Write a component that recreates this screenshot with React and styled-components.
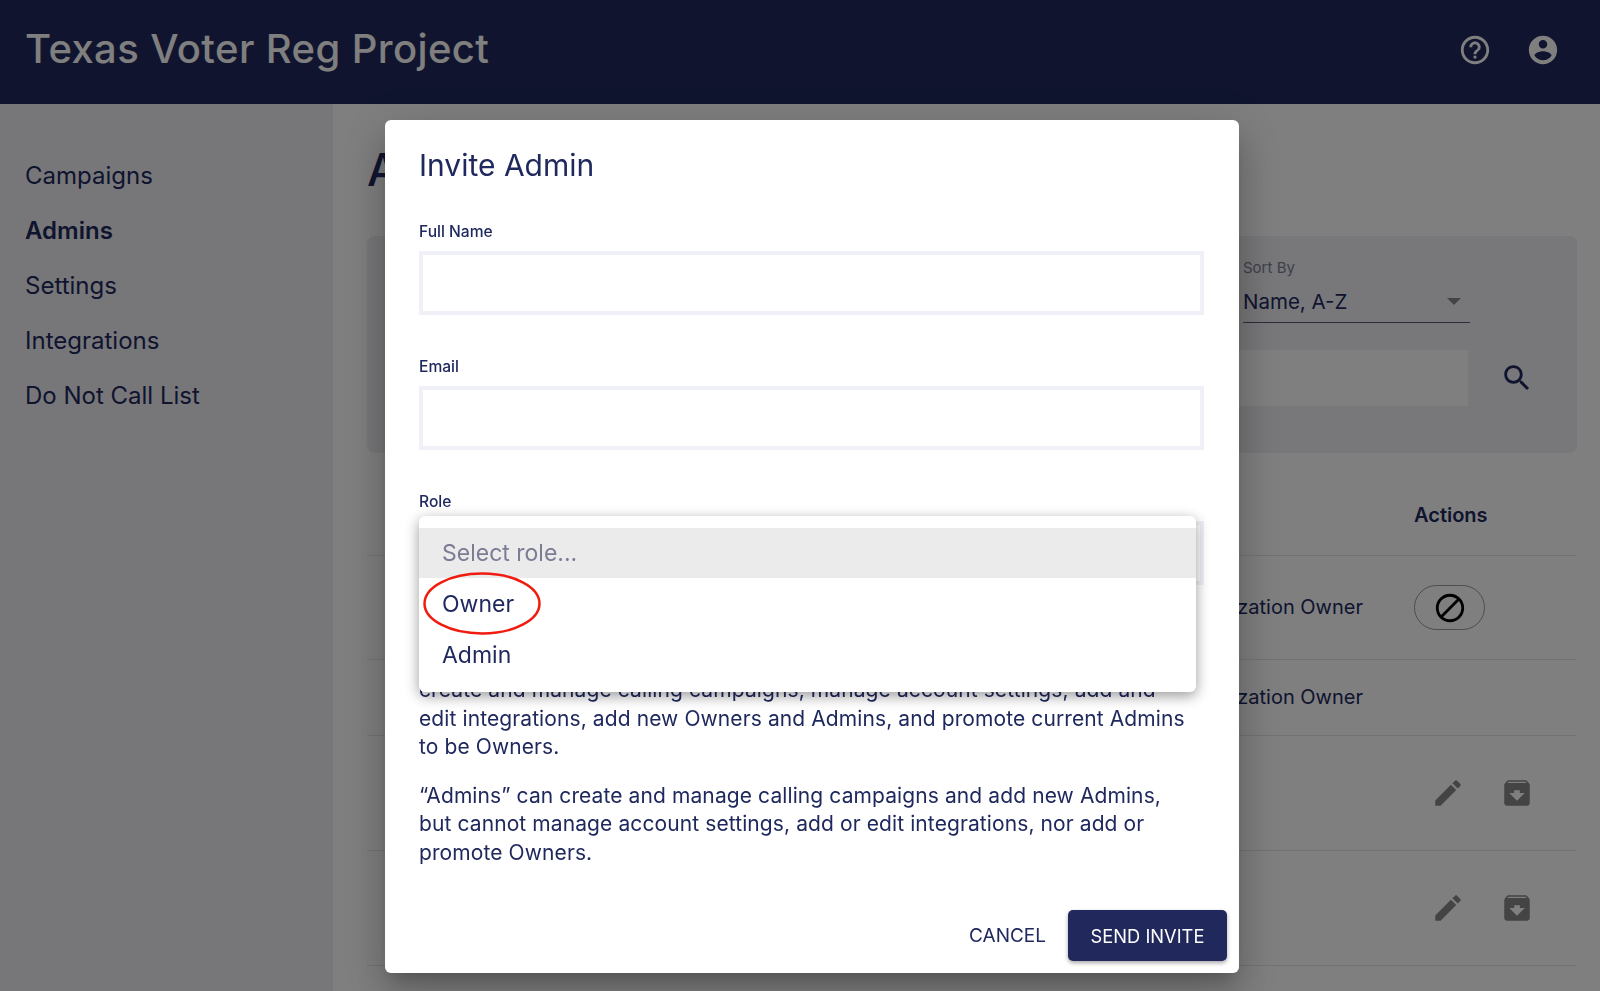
import styled, { createGlobalStyle } from 'styled-components';

const NAVY = '#20295e';

const GlobalStyle = createGlobalStyle`
  html, body {
    margin: 0;
    height: 991px;
    overflow: hidden;
    background: #fff;
    font-family: Inter, "Noto Sans", sans-serif;
    color: ${NAVY};
  }
  * { box-sizing: border-box; }
`;

const Header = styled.header`
  height: 104px;
  background: ${NAVY};
  display: flex;
  align-items: center;
  justify-content: space-between;
  padding: 0 40px 4px 25px;
`;

const Brand = styled.div`
  color: #fff;
  font-size: 40px;
  font-weight: 500;
  letter-spacing: 0.4px;
  margin-top: -3px;
`;

const HeaderIcons = styled.div`
  display: flex;
  gap: 34px;
  color: #fff;
`;

const Body = styled.div`
  display: flex;
  height: 887px;
  overflow: hidden;
`;

const Sidebar = styled.nav`
  width: 333px;
  flex: none;
  background: #eeeef2;
  padding: 44px 0 0 25px;
  display: flex;
  flex-direction: column;
`;

const NavItem = styled.a`
  height: 55px;
  line-height: 55px;
  font-size: 24px;
  font-weight: ${(props) => (props.active ? 600 : 400)};
`;

const Main = styled.main`
  flex: 1;
  padding: 44px 23px 0 34px;
`;

const PageTitle = styled.h1`
  margin: 0;
  height: 88px;
  font-size: 45px;
  line-height: 44px;
  font-weight: 500;
`;

const FilterPanel = styled.section`
  height: 217px;
  background: #f0f0f4;
  border-radius: 8px;
  padding: 21px 43px 0 0;
  display: flex;
  flex-direction: column;
  align-items: flex-end;
`;

const SortField = styled.div`
  width: 227px;
  margin-right: 64px;
`;

const SortLabel = styled.div`
  font-size: 15px;
  line-height: 22px;
  color: #7c7f98;
`;

const SortValue = styled.div`
  height: 44px;
  display: flex;
  align-items: center;
  justify-content: space-between;
  font-size: 20.5px;
  border-bottom: 1.5px solid #555a72;
  padding: 1px 9px 0 0;
`;

const Caret = styled.span`
  width: 0;
  height: 0;
  border-left: 7px solid transparent;
  border-right: 7px solid transparent;
  border-top: 7px solid #888;
`;

const SearchRow = styled.div`
  display: flex;
  align-items: center;
  gap: 32px;
  margin-top: 27px;
`;

const SearchInput = styled.div`
  width: 900px;
  height: 56px;
  background: #fff;
`;

const TableHead = styled.div`
  height: 103px;
  display: flex;
  justify-content: flex-end;
  align-items: flex-end;
  padding: 0 0 27px 0;
  border-bottom: 1px solid #e6e6e6;
`;

const ActionsTitle = styled.div`
  width: 163px;
  font-size: 20px;
  font-weight: 600;
  line-height: 26px;
`;

const Row = styled.div`
  height: ${(props) => props.height}px;
  display: flex;
  justify-content: flex-end;
  align-items: center;
  border-bottom: 1px solid #e6e6e6;
`;

const RoleCell = styled.div`
  font-size: 20px;
  margin-right: 51px;
  padding-bottom: 2px;
`;

const ActionCell = styled.div`
  width: 163px;
  display: flex;
  align-items: center;
  gap: 35px;
  padding-left: ${(props) => (props.pill ? 0 : 17)}px;
  color: #888;
`;

const PillButton = styled.div`
  width: 71px;
  height: 45px;
  border: 1px solid #9a9a9a;
  border-radius: 23px;
  display: flex;
  align-items: center;
  justify-content: center;
  color: #000;
`;

const Overlay = styled.div`
  position: fixed;
  inset: 0;
  background: rgba(0, 0, 0, 0.5);
  padding: 120px 0 0 385px;
`;

const Modal = styled.div`
  width: 854px;
  height: 853px;
  background: #fff;
  border-radius: 6px;
  padding: 25px 12px 11px 34px;
  box-shadow: 0 11px 15px -7px rgba(0, 0, 0, 0.2), 0 24px 38px 3px rgba(0, 0, 0, 0.14),
    0 9px 46px 8px rgba(0, 0, 0, 0.12);
`;

const ModalTitle = styled.h2`
  margin: 0 0 37px;
  font-size: 30px;
  line-height: 40px;
  font-weight: 400;
`;

const Content = styled.div`
  padding-right: 23px;
`;

const Field = styled.div`
  position: relative;
  margin-bottom: ${(props) => props.gap || 42}px;
`;

const Label = styled.div`
  font-size: 15.6px;
  line-height: 20px;
  font-weight: 500;
  margin-bottom: 9px;
`;

const TextBox = styled.div`
  height: 64px;
  border: 4px solid #f0f0f8;
  background: #fff;
`;

const Dropdown = styled.div`
  position: absolute;
  top: 24px;
  left: 0;
  right: 8px;
  height: 176px;
  padding: 12px 0;
  background: #fff;
  border-radius: 6px;
  box-shadow: 0 4px 14px rgba(0, 0, 0, 0.4);
`;

const Option = styled.div`
  height: ${(props) => (props.selected ? 50 : 51)}px;
  display: flex;
  align-items: center;
  padding-left: 23px;
  font-size: 23px;
  background: ${(props) => (props.selected ? '#ebebeb' : 'transparent')};
  color: ${(props) => (props.selected ? '#7c7c95' : NAVY)};
`;

const Callout = styled.svg`
  position: absolute;
  left: 4px;
  top: 56px;
`;

const Paragraph = styled.p`
  margin: 0 0 20px;
  font-size: 21px;
  letter-spacing: 0.1px;
  line-height: 28.5px;
  white-space: nowrap;
`;

const Footer = styled.div`
  display: flex;
  justify-content: flex-end;
  align-items: center;
  gap: 22px;
  margin-top: 43px;
`;

const CancelButton = styled.button`
  background: none;
  border: 0;
  padding: 0;
  font-family: Inter, sans-serif;
  font-size: 19px;
  color: ${NAVY};
`;

const SendButton = styled.button`
  width: 159px;
  height: 51px;
  background: #20285c;
  color: #fff;
  border: 0;
  border-radius: 5px;
  font-family: Inter, sans-serif;
  font-size: 18.3px;
  box-shadow: 0 2px 4px rgba(0, 0, 0, 0.35);
`;

const Icon = ({ d, size = 34 }) => (
  <svg width={size} height={size} viewBox="0 0 24 24" fill="currentColor">
    <path d={d} />
  </svg>
);

const ICONS = {
  help: 'M11 18h2v-2h-2v2zm1-16C6.48 2 2 6.48 2 12s4.48 10 10 10 10-4.48 10-10S17.52 2 12 2zm0 18c-4.41 0-8-3.59-8-8s3.59-8 8-8 8 3.59 8 8-3.59 8-8 8zm0-14c-2.21 0-4 1.79-4 4h2c0-1.1.9-2 2-2s2 .9 2 2c0 2-3 1.75-3 5h2c0-2.25 3-2.5 3-5 0-2.21-1.79-4-4-4z',
  account: 'M12 2C6.48 2 2 6.48 2 12s4.48 10 10 10 10-4.48 10-10S17.52 2 12 2zm0 3c1.66 0 3 1.34 3 3s-1.34 3-3 3-3-1.34-3-3 1.34-3 3-3zm0 14.2c-2.5 0-4.71-1.28-6-3.22.03-1.99 4-3.08 6-3.08 1.99 0 5.97 1.09 6 3.08-1.29 1.94-3.5 3.22-6 3.22z',
  search: 'M15.5 14h-.79l-.28-.27C15.41 12.59 16 11.11 16 9.5 16 5.91 13.09 3 9.5 3S3 5.91 3 9.5 5.91 16 9.5 16c1.61 0 3.09-.59 4.23-1.57l.27.28v.79l5 4.99L20.49 19l-4.99-5zm-6 0C7.01 14 5 11.99 5 9.5S7.01 5 9.5 5 14 7.01 14 9.5 11.99 14 9.5 14z',
  edit: 'M3 17.25V21h3.75L17.81 9.94l-3.75-3.75L3 17.25zM20.71 7.04c.39-.39.39-1.02 0-1.41l-2.34-2.34c-.39-.39-1.02-.39-1.41 0l-1.83 1.83 3.75 3.75 1.83-1.83z',
  archive: 'M20.54 5.23l-1.39-1.68C18.88 3.21 18.47 3 18 3H6c-.47 0-.88.21-1.16.55L3.46 5.23C3.17 5.57 3 6.02 3 6.5V19c0 1.1.9 2 2 2h14c1.1 0 2-.9 2-2V6.5c0-.48-.17-.93-.46-1.27zM12 17.5L6.5 12H10v-2h4v2h3.5L12 17.5zM5.12 5l.81-1h12l.94 1H5.12z',
  block: 'M12 2C6.48 2 2 6.48 2 12s4.48 10 10 10 10-4.48 10-10S17.52 2 12 2zM4 12c0-4.42 3.58-8 8-8 1.85 0 3.55.63 4.9 1.69L5.69 16.9C4.63 15.55 4 13.85 4 12zm8 8c-1.85 0-3.55-.63-4.9-1.69L18.31 7.1C19.37 8.45 20 10.15 20 12c0 4.42-3.58 8-8 8z',
};

const NAV_ITEMS = ['Campaigns', 'Admins', 'Settings', 'Integrations', 'Do Not Call List'];

const EditActions = () => (
  <ActionCell>
    <Icon d={ICONS.edit} />
    <Icon d={ICONS.archive} />
  </ActionCell>
);

const App = () => (
  <>
    <GlobalStyle />
    <Header>
      <Brand>Texas Voter Reg Project</Brand>
      <HeaderIcons>
        <Icon d={ICONS.help} />
        <Icon d={ICONS.account} />
      </HeaderIcons>
    </Header>
    <Body>
      <Sidebar>
        {NAV_ITEMS.map((item) => (
          <NavItem key={item} active={item === 'Admins'}>
            {item}
          </NavItem>
        ))}
      </Sidebar>
      <Main>
        <PageTitle>Admins</PageTitle>
        <FilterPanel>
          <SortField>
            <SortLabel>Sort By</SortLabel>
            <SortValue>
              Name, A-Z
              <Caret />
            </SortValue>
          </SortField>
          <SearchRow>
            <SearchInput />
            <Icon d={ICONS.search} />
          </SearchRow>
        </FilterPanel>
        <TableHead>
          <ActionsTitle>Actions</ActionsTitle>
        </TableHead>
        <Row height={104}>
          <RoleCell>Organization Owner</RoleCell>
          <ActionCell pill>
            <PillButton>
              <Icon d={ICONS.block} />
            </PillButton>
          </ActionCell>
        </Row>
        <Row height={76}>
          <RoleCell>Organization Owner</RoleCell>
          <ActionCell />
        </Row>
        <Row height={115}>
          <EditActions />
        </Row>
        <Row height={115}>
          <EditActions />
        </Row>
        <Row height={115}>
          <ActionCell pill>
            <PillButton />
          </ActionCell>
        </Row>
      </Main>
    </Body>
    <Overlay>
      <Modal>
        <ModalTitle>Invite Admin</ModalTitle>
        <Content>
          <Field>
            <Label>Full Name</Label>
            <TextBox />
          </Field>
          <Field>
            <Label>Email</Label>
            <TextBox />
          </Field>
          <Field gap={91}>
            <Label>Role</Label>
            <TextBox />
            <Dropdown>
              <Option selected>Select role...</Option>
              <Option>Owner</Option>
              <Option>Admin</Option>
              <Callout width="118" height="63" viewBox="0 0 118 63" fill="none">
                <ellipse cx="59" cy="31.5" rx="57.5" ry="30" stroke="#f01c10" strokeWidth="2.5" />
              </Callout>
            </Dropdown>
          </Field>
          <Paragraph>
            create and manage calling campaigns, manage account settings, add and
            <br />
            edit integrations, add new Owners and Admins, and promote current Admins
            <br />
            to be Owners.
          </Paragraph>
          <Paragraph>
            “Admins” can create and manage calling campaigns and add new Admins,
            <br />
            but cannot manage account settings, add or edit integrations, nor add or
            <br />
            promote Owners.
          </Paragraph>
        </Content>
        <Footer>
          <CancelButton>CANCEL</CancelButton>
          <SendButton>SEND INVITE</SendButton>
        </Footer>
      </Modal>
    </Overlay>
  </>
);

export default App;
